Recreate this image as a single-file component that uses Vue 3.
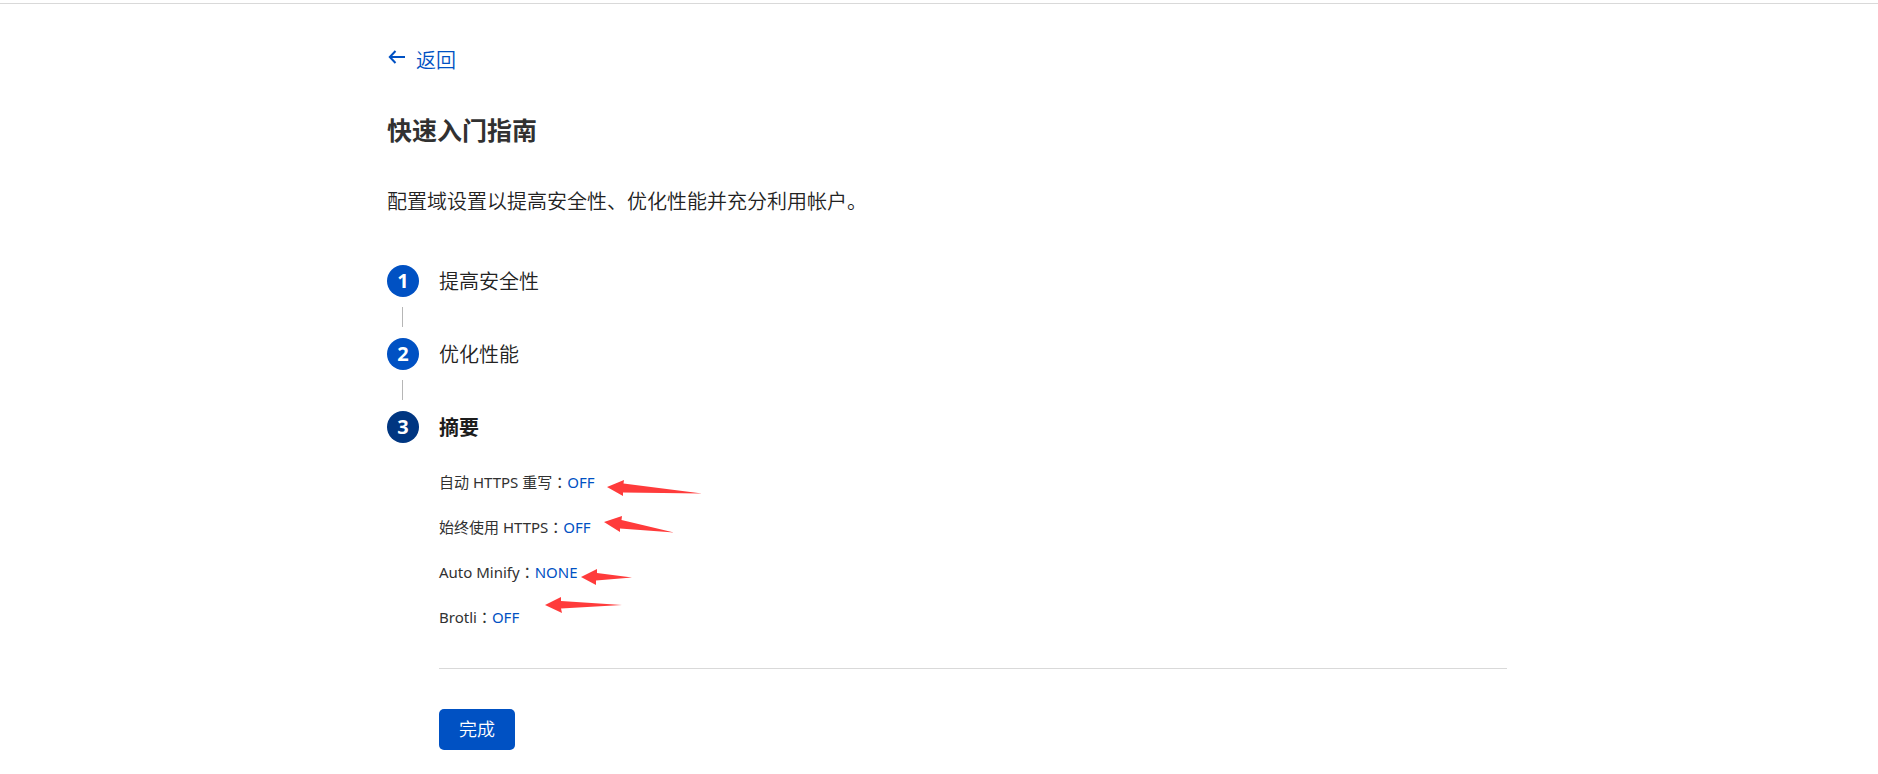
<template>
  <main class="page">
    <div class="content">
      <a class="back" href="#">
        <svg class="back-icon" width="18" height="14" viewBox="0 0 18 14" aria-hidden="true">
          <path d="M17 7H2M7.500 1L1.800 7l5.700 6" fill="none" stroke="currentColor" stroke-width="2" />
        </svg>
        <span>返回</span>
      </a>
      <h1 class="title">快速入门指南</h1>
      <p class="intro">配置域设置以提高安全性、优化性能并充分利用帐户。</p>

      <ol class="steps">
        <li v-for="(step, index) in steps" :key="step" class="step">
          <div class="step-head" :class="{ active: index === current }">
            <span class="step-number">{{ index + 1 }}</span>
            <span class="step-name">{{ step }}</span>
          </div>
          <div v-if="index < steps.length - 1" class="connector"></div>
        </li>
      </ol>

      <section class="summary">
        <ul class="settings">
          <li v-for="item in settings" :key="item.name">
            {{ item.name }}<span class="colon">：</span><span class="value">{{ item.value }}</span>
          </li>
        </ul>
        <!-- red arrows pointing at the setting values -->
        <svg class="arrows" width="280" height="150" viewBox="0 0 280 150" aria-hidden="true">
          <polygon v-for="points in arrows" :key="points" :points="points" />
        </svg>
        <div class="actions">
          <button type="button" class="done">完成</button>
        </div>
      </section>
    </div>
  </main>
</template>

<script setup>
import { ref } from 'vue'

const steps = ['提高安全性', '优化性能', '摘要']
const current = ref(2)

const settings = [
  { name: '自动 HTTPS 重写', value: 'OFF' },
  { name: '始终使用 HTTPS', value: 'OFF' },
  { name: 'Auto Minify', value: 'NONE' },
  { name: 'Brotli', value: 'OFF' }
]

const arrows = [
  '168,17 185,10 184.500,13.500 263,23.500 184,22.500 184,26',
  '165,52 183,46 182.500,50 235,62.500 181,58.500 181,62',
  '142,107 158,99 158,103 193,107.500 157,110.500 157,115',
  '106,135 122,127 122,131 183,135 122,138.500 123,143'
]
</script>

<style>
body {
  background: #fff;
}
</style>

<style scoped>
.page {
  margin-top: 3px;
  border-top: 1px solid #d9d9d9;
  color: #222;
  font-family: "Noto Sans", "Noto Sans CJK SC", sans-serif;
  font-size: 20px;
  line-height: 30px;
}
.content {
  box-sizing: border-box;
  max-width: 1152px;
  margin: 0 auto;
  padding: 40px 8px 24px 24px;
}
.back {
  display: flex;
  align-items: center;
  gap: 10px;
  width: fit-content;
  color: #0051c3;
  font-weight: 350;
  line-height: 34px;
  text-decoration: none;
}
.back-icon {
  margin: 0 0 8px 1px;
}
.title {
  margin: 32px 0 0;
  color: #313131;
  font-size: 25px;
  line-height: 40px;
}
.intro {
  margin: 37px 0 0;
  font-weight: 350;
}
.steps,
.settings {
  margin: 0;
  padding: 0;
  list-style: none;
}
.steps {
  margin-top: 48px;
}
.step-head {
  display: flex;
  align-items: center;
  gap: 20px;
  height: 32px;
}
.step-number {
  width: 32px;
  height: 32px;
  border-radius: 50%;
  background: #0051c3;
  color: #fff;
  font-weight: 700;
  line-height: 32px;
  text-align: center;
}
.step-name {
  padding-top: 2px;
  font-weight: 350;
}
.active .step-number {
  background: #003681;
}
.active .step-name {
  color: #1d1d1d;
  font-weight: 700;
}
.connector {
  width: 1px;
  height: 20px;
  margin: 10px 15px 11px;
  background: #b6b6b6;
}
.summary {
  position: relative;
  margin: 27px 0 0 52px;
}
.settings {
  display: grid;
  gap: 21px;
  color: #313131;
  font-size: 15px;
  line-height: 24px;
}
.colon {
  font-family: "Noto Sans CJK TC", sans-serif;
  line-height: 1;
}
.value {
  color: #0051c3;
}
.arrows {
  position: absolute;
  top: 0;
  left: 0;
  fill: #ff3b3b;
}
.actions {
  margin-top: 39px;
  padding-top: 40px;
  border-top: 1px solid #d9d9d9;
}
.done {
  padding: 6px 20px;
  border: 0;
  border-radius: 5px;
  background: #0051c3;
  color: #fff;
  font-family: inherit;
  font-size: 18px;
  font-weight: 350;
  line-height: 29px;
}
</style>
